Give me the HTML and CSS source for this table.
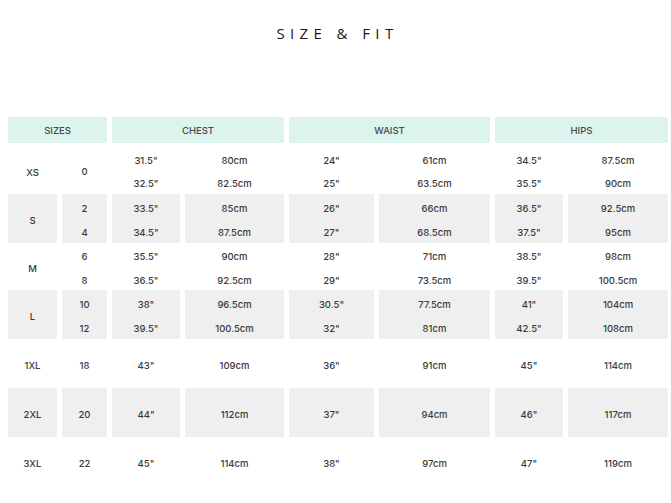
FILE: index.html
```html
<!DOCTYPE html>
<html>
<head>
<meta charset="utf-8">
<link rel="stylesheet" href="styles.css">
</head>
<body>
<h1 class="title">SIZE &amp; FIT</h1>
<div class="chart">
  <div class="hd span2">SIZES</div>
  <div class="hd span2">CHEST</div>
  <div class="hd span2">WAIST</div>
  <div class="hd span2">HIPS</div>

  <div class="c">XS</div>
  <div class="c"><span>0</span></div>
  <div class="c"><span>31.5"</span><span>32.5"</span></div>
  <div class="c"><span>80cm</span><span>82.5cm</span></div>
  <div class="c"><span>24"</span><span>25"</span></div>
  <div class="c"><span>61cm</span><span>63.5cm</span></div>
  <div class="c"><span>34.5"</span><span>35.5"</span></div>
  <div class="c"><span>87.5cm</span><span>90cm</span></div>

  <div class="c g">S</div>
  <div class="c g"><span>2</span><span>4</span></div>
  <div class="c g"><span>33.5"</span><span>34.5"</span></div>
  <div class="c g"><span>85cm</span><span>87.5cm</span></div>
  <div class="c g"><span>26"</span><span>27"</span></div>
  <div class="c g"><span>66cm</span><span>68.5cm</span></div>
  <div class="c g"><span>36.5"</span><span>37.5"</span></div>
  <div class="c g"><span>92.5cm</span><span>95cm</span></div>

  <div class="c">M</div>
  <div class="c"><span>6</span><span>8</span></div>
  <div class="c"><span>35.5"</span><span>36.5"</span></div>
  <div class="c"><span>90cm</span><span>92.5cm</span></div>
  <div class="c"><span>28"</span><span>29"</span></div>
  <div class="c"><span>71cm</span><span>73.5cm</span></div>
  <div class="c"><span>38.5"</span><span>39.5"</span></div>
  <div class="c"><span>98cm</span><span>100.5cm</span></div>

  <div class="c g">L</div>
  <div class="c g"><span>10</span><span>12</span></div>
  <div class="c g"><span>38"</span><span>39.5"</span></div>
  <div class="c g"><span>96.5cm</span><span>100.5cm</span></div>
  <div class="c g"><span>30.5"</span><span>32"</span></div>
  <div class="c g"><span>77.5cm</span><span>81cm</span></div>
  <div class="c g"><span>41"</span><span>42.5"</span></div>
  <div class="c g"><span>104cm</span><span>108cm</span></div>

  <div class="c">1XL</div>
  <div class="c">18</div>
  <div class="c">43"</div>
  <div class="c">109cm</div>
  <div class="c">36"</div>
  <div class="c">91cm</div>
  <div class="c">45"</div>
  <div class="c">114cm</div>

  <div class="c g">2XL</div>
  <div class="c g">20</div>
  <div class="c g">44"</div>
  <div class="c g">112cm</div>
  <div class="c g">37"</div>
  <div class="c g">94cm</div>
  <div class="c g">46"</div>
  <div class="c g">117cm</div>

  <div class="c">3XL</div>
  <div class="c">22</div>
  <div class="c">45"</div>
  <div class="c">114cm</div>
  <div class="c">38"</div>
  <div class="c">97cm</div>
  <div class="c">47"</div>
  <div class="c">119cm</div>
</div>
</body>
</html>
```

FILE: styles.css
```css
html, body {
  margin: 0;
  padding: 0;
  background: #ffffff;
}

body {
  width: 671px;
  font-family: "Inter", "Liberation Sans", sans-serif;
}

.title {
  margin: 0;
  padding-top: 24px;
  padding-left: 4px;
  height: 117px;
  box-sizing: border-box;
  text-align: center;
  font-family: "Open Sans", "Liberation Sans", sans-serif;
  font-weight: 400;
  font-size: 15px;
  line-height: 18px;
  letter-spacing: 5.4px;
  color: #1a1a1a;
}

.chart {
  display: grid;
  margin-left: 8px;
  grid-template-columns: 49px 45px 68px 99px 85px 111px 68px 100px;
  grid-template-rows: 29px 48px 49px 47px 49px 49px 49px 49px;
  column-gap: 5px;
}

.hd {
  background: #dcf3ee;
  color: #4a4a4a;
  font-size: 9.5px;
  font-weight: 500;
  display: flex;
  align-items: center;
  justify-content: center;
  height: 26px;
  align-self: start;
}

.span2 {
  grid-column: span 2;
}

.c {
  display: flex;
  flex-direction: column;
  align-items: center;
  justify-content: center;
  padding-top: 4px;
  font-size: 9.5px;
  font-weight: 500;
  color: #3a3a3a;
}

.c span {
  display: block;
  line-height: 23.5px;
}

.g {
  background: #efefef;
}
```
